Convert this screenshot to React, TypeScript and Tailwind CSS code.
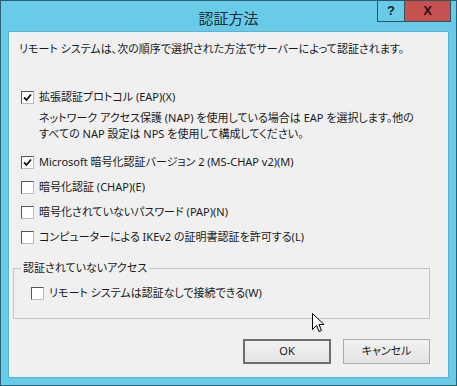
import React from 'react'

const jp = "font-['Segoe_UI','Noto_Sans','Noto_Sans_CJK_JP',sans-serif] [font-feature-settings:'palt']"

const CheckBox = ({ checked }: { checked?: boolean }) => (
  <span className="relative w-[13px] h-[13px] shrink-0 bg-white border border-t-[#555] border-l-[#555] border-r-[#bdbdbd] border-b-[#bdbdbd]">
    {checked && (
      <svg className="absolute left-[1px] top-[1px]" width="9" height="9" viewBox="0 0 9 9">
        <path d="M1 4.5 L3.5 7 L8 1.5" fill="none" stroke="#111" strokeWidth="1.8" />
      </svg>
    )}
  </span>
)

const Row = ({ checked, label, className }: { checked?: boolean; label: string; className?: string }) => (
  <div className={'flex items-center h-[16px] pl-[12px] gap-[5px] ' + (className ?? '')}>
    <CheckBox checked={checked} />
    <span className="leading-[16px] whitespace-nowrap">{label}</span>
  </div>
)

export default function App() {
  return (
    <div className={'relative w-[457px] h-[386px] bg-[#68cbe8] border border-[#2f5f75] flex flex-col text-[11px] text-[#1a1a1a] ' + jp}>
      {/* title bar */}
      <div className="relative h-[30px] shrink-0 flex items-center justify-center">
        <span className="text-[15px] text-[#1c2e38] mt-[4px]">認証方法</span>
        <div className="absolute right-[5px] top-[-1px] flex">
          <div className="w-[28px] h-[22px] border border-[#34525f] flex items-center justify-center font-bold text-[13px] text-[#16242b] font-['Liberation_Sans',sans-serif]">?</div>
          <div className="w-[46px] h-[22px] bg-[#c75050] border border-l-0 border-[#34525f] flex items-center justify-center font-bold text-[13px] text-[#2a1010] font-['Liberation_Sans',sans-serif]">X</div>
        </div>
      </div>

      {/* client area */}
      <div className="flex-1 mx-[7px] mb-[7px] bg-[#f0f0f0] border border-[#58b4d2] flex flex-col">
        <div className="pl-[10px] mt-[9px] leading-[16px] whitespace-nowrap">
          リモート システムは、次の順序で選択された方法でサーバーによって認証されます。
        </div>

        <Row checked label="拡張認証プロトコル (EAP)(X)" className="mt-[32px]" />
        <div className="pl-[30px] mt-[5px] leading-[16px] whitespace-nowrap">
          <div>ネットワーク アクセス保護 (NAP) を使用している場合は EAP を選択します。他の</div>
          <div>すべての NAP 設定は NPS を使用して構成してください。</div>
        </div>

        <Row checked label="Microsoft 暗号化認証バージョン 2 (MS-CHAP v2)(M)" className="mt-[12px]" />
        <Row label="暗号化認証 (CHAP)(E)" className="mt-[9px]" />
        <Row label="暗号化されていないパスワード (PAP)(N)" className="mt-[9px]" />
        <Row label="コンピューターによる IKEv2 の証明書認証を許可する(L)" className="mt-[9px]" />

        <fieldset className="ml-[4px] mt-[15px] w-[417px] h-[59px] border border-[#c4c4c4] pl-[7px] pt-0">
          <legend className="px-[2px] leading-[16px]">認証されていないアクセス</legend>
          <div className="flex items-center gap-[5px] pl-[10px] mt-[9px] h-[16px]">
            <CheckBox />
            <span className="leading-[16px]">リモート システムは認証なしで接続できる(W)</span>
          </div>
        </fieldset>

        <div className="flex justify-end gap-[12px] mr-[18px] mt-[20px]">
          <button className="w-[88px] h-[25px] border-2 border-[#6e6e6e] bg-gradient-to-b from-[#f2f2f2] to-[#e3e3e3]">OK</button>
          <button className="w-[87px] h-[25px] border border-[#acacac] bg-gradient-to-b from-[#f2f2f2] to-[#e3e3e3]">キャンセル</button>
        </div>
      </div>

      {/* mouse pointer */}
      <svg className="absolute left-[311px] top-[312px]" width="13" height="21" viewBox="0 0 13 21">
        <path d="M0.5 0.5 L0.5 16.5 L4.5 12.5 L7 18.5 L9.5 17.5 L7 11.5 L12 11.5 Z" fill="#fff" stroke="#000" strokeWidth="1" />
      </svg>
    </div>
  )
}
